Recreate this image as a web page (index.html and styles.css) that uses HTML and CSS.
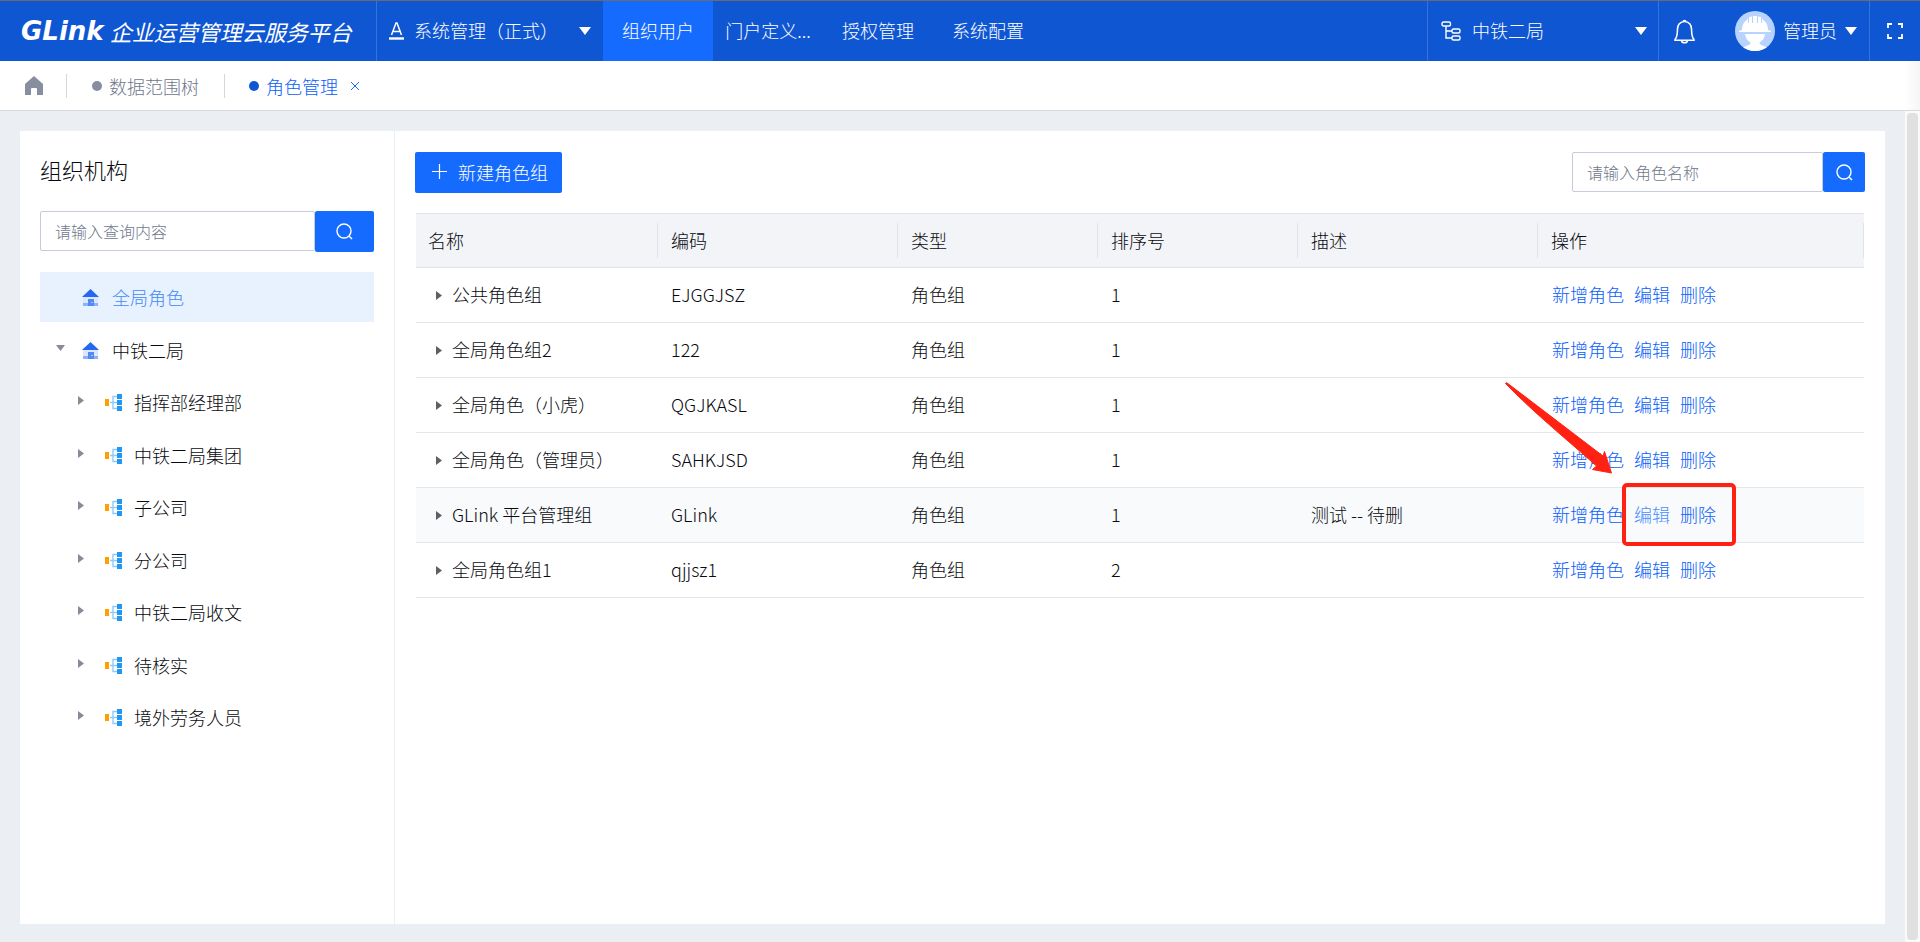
FILE: index.html
```
<!DOCTYPE html>
<html lang="zh-CN">
<head>
<meta charset="utf-8">
<meta name="viewport" content="width=device-width, initial-scale=1">
<title>角色管理</title>
<link rel="stylesheet" href="styles.css">
</head>
<body>
<svg class="symbols" aria-hidden="true">
  <symbol id="i-down" viewBox="0 0 12 8"><path d="M0 0h12L6 8z" fill="currentColor"/></symbol>
  <symbol id="i-right" viewBox="0 0 6 9"><path d="M0 0l6 4.500L0 9z" fill="currentColor"/></symbol>
  <symbol id="i-search" viewBox="0 0 17 17"><circle cx="8" cy="8" r="7" fill="none" stroke="currentColor" stroke-width="1.4"/><path d="M13 13l3 3" stroke="currentColor" stroke-width="1.4"/></symbol>
  <symbol id="i-house" viewBox="0 0 17 17"><path d="M1 7h15v7H1z" fill="#dbe7ff"/><path d="M1 14h15v3H1z" fill="#8db2fa"/><path d="M6 10h6v7H6z" fill="#5389f5"/><path d="M9.500 13h1v1h-1z" fill="#fff"/><path d="M8.500 0L17 8H0z" fill="#2468f2"/></symbol>
  <symbol id="i-org" viewBox="0 0 17 17"><path d="M5 8.500h7M12 2.500H8v12h4" fill="none" stroke="#90caf9" stroke-width="1.400"/><path d="M0 5h4v7H0z" fill="#ff9f00"/><path d="M12 0h5v5h-5zM12 6h5v5h-5zM12 12h5v5h-5z" fill="#2196f3"/></symbol>
</svg>

<header class="topbar">
  <div class="logo"><span class="logo-mark">GLink</span><span class="logo-name">企业运营管理云服务平台</span></div>
  <div class="picker picker-system">
    <svg class="picker-icon" width="15" height="18" viewBox="0 0 15 18" fill="none" stroke="#fff"><path d="M2.500 13L7 1h1l4.500 12M4.500 9.500h6" stroke-width="1.500"/><path d="M0 16.500h15" stroke-width="2.400"/></svg>
    <select aria-label="系统"><option>系统管理（正式）</option></select>
    <svg class="caret" width="12" height="8"><use href="#i-down"/></svg>
  </div>
  <nav class="menu">
    <a class="active" href="#">组织用户</a>
    <a href="#">门户定义...</a>
    <a href="#">授权管理</a>
    <a href="#">系统配置</a>
  </nav>
  <div class="picker picker-org">
    <svg class="picker-icon" width="20" height="20" viewBox="0 0 20 20" fill="none" stroke="#fff" stroke-width="1.400"><rect x="1" y="1" width="8.500" height="4" rx="1.500"/><rect x="11" y="8" width="8" height="4" rx="1.500"/><rect x="11" y="15" width="8" height="4" rx="1.500"/><path d="M5 5v12h6M5 10h6"/></svg>
    <select aria-label="组织"><option>中铁二局</option></select>
    <svg class="caret" width="12" height="8"><use href="#i-down"/></svg>
  </div>
  <button class="bell" type="button" aria-label="通知">
    <svg width="21" height="25" viewBox="0 0 21 25" fill="none" stroke="#fff" stroke-width="1.600"><path d="M9 2.500a1.600 1.600 0 0 1 3 0M10.500 2.500c-4.500 0-7 3.500-7 7.500 0 4-.4 6.500-1.200 8.500-.5 1-1.300 1.300-1.300 2.800h19c0-1.500-.8-1.800-1.300-2.800-.8-2-1.200-4.500-1.200-8.500 0-4-2.500-7.500-7-7.500zM7.500 21.500c.5 3 5.500 3 6 0"/></svg>
  </button>
  <button class="user" type="button">
    <svg width="40" height="40" viewBox="0 0 40 40"><defs><clipPath id="face"><circle cx="20" cy="20" r="20"/></clipPath></defs><g clip-path="url(#face)"><path d="M0 0h40v40H0z" fill="#b9d3ff"/><path d="M7 19c0-6 3-9 5-10l1-2v5h1V6l3-.5V12h1V5h4v7h1V5.500l3 .5v6h1V7l1 2c2 1 5 4 5 10l3 1v1H4v-1z" fill="#fff"/><path d="M10 23h20c-.5 4-2.500 7-5.500 8.500 0 2 1 2.500 8.500 5V40H7v-3.500c7.500-2.500 8.500-3 8.500-5C12.500 30 10.500 27 10 23z" fill="#fff"/></g></svg>
    <span>管理员</span>
    <svg class="caret" width="12" height="8"><use href="#i-down"/></svg>
  </button>
  <button class="fullscreen" type="button" aria-label="全屏">
    <svg width="16" height="16" viewBox="0 0 16 16" fill="none" stroke="#fff" stroke-width="1.800"><path d="M1 5V1h4M11 1h4v4M15 11v4h-4M5 15H1v-4"/></svg>
  </button>
</header>

<nav class="tabs">
  <a class="home" href="#" aria-label="首页"><svg width="18" height="19" viewBox="0 0 18 19"><path d="M9 0l9 8v11h-6v-6a1 1 0 0 0-1-1H7a1 1 0 0 0-1 1v6H0V8z" fill="#868e9f"/></svg></a>
  <a class="tab" href="#"><i class="dot"></i>数据范围树</a>
  <div class="tab current"><i class="dot"></i><a href="#">角色管理</a><button type="button" aria-label="关闭"><svg width="10" height="10" viewBox="0 0 10 10"><path d="M1 1l8 8M9 1L1 9" stroke="#1a6cff"/></svg></button></div>
</nav>

<main class="stage">
  <div class="panel">
    <aside class="side">
      <h1>组织机构</h1>
      <form class="search">
        <input type="text" aria-label="查询内容" placeholder="请输入查询内容">
        <button type="button" aria-label="查询"><svg width="17" height="17"><use href="#i-search"/></svg></button>
      </form>
      <ul class="tree">
        <li class="root selected"><span class="toggle"></span><svg width="17" height="17"><use href="#i-house"/></svg>全局角色</li>
        <li class="root"><span class="toggle"><svg width="9" height="6"><use href="#i-down"/></svg></span><svg width="17" height="17"><use href="#i-house"/></svg>中铁二局</li>
        <li><span class="toggle"><svg width="6" height="9"><use href="#i-right"/></svg></span><svg width="17" height="17"><use href="#i-org"/></svg>指挥部经理部</li>
        <li><span class="toggle"><svg width="6" height="9"><use href="#i-right"/></svg></span><svg width="17" height="17"><use href="#i-org"/></svg>中铁二局集团</li>
        <li><span class="toggle"><svg width="6" height="9"><use href="#i-right"/></svg></span><svg width="17" height="17"><use href="#i-org"/></svg>子公司</li>
        <li><span class="toggle"><svg width="6" height="9"><use href="#i-right"/></svg></span><svg width="17" height="17"><use href="#i-org"/></svg>分公司</li>
        <li><span class="toggle"><svg width="6" height="9"><use href="#i-right"/></svg></span><svg width="17" height="17"><use href="#i-org"/></svg>中铁二局收文</li>
        <li><span class="toggle"><svg width="6" height="9"><use href="#i-right"/></svg></span><svg width="17" height="17"><use href="#i-org"/></svg>待核实</li>
        <li><span class="toggle"><svg width="6" height="9"><use href="#i-right"/></svg></span><svg width="17" height="17"><use href="#i-org"/></svg>境外劳务人员</li>
      </ul>
    </aside>

    <section class="content">
      <div class="toolbar">
        <button class="create" type="button"><svg width="15" height="15" viewBox="0 0 15 15"><path d="M7.500 0v15M0 7.500h15" stroke="#fff" stroke-width="1.200"/></svg>新建角色组</button>
        <form class="search search-role">
          <input type="text" aria-label="角色名称" placeholder="请输入角色名称">
          <button type="button" aria-label="搜索"><svg width="17" height="17"><use href="#i-search"/></svg></button>
        </form>
      </div>
      <div class="table-wrap">
      <table class="roles">
        <colgroup><col class="c-name"><col class="c-code"><col class="c-type"><col class="c-sort"><col class="c-desc"><col></colgroup>
        <thead>
          <tr><th><span>名称</span></th><th><span>编码</span></th><th><span>类型</span></th><th><span>排序号</span></th><th><span>描述</span></th><th><span>操作</span></th></tr>
        </thead>
        <tbody>
          <tr><td class="name"><svg width="6" height="9"><use href="#i-right"/></svg>公共角色组</td><td>EJGGJSZ</td><td>角色组</td><td>1</td><td></td><td class="ops"><a href="#">新增角色</a><a href="#">编辑</a><a href="#">删除</a></td></tr>
          <tr><td class="name"><svg width="6" height="9"><use href="#i-right"/></svg>全局角色组2</td><td>122</td><td>角色组</td><td>1</td><td></td><td class="ops"><a href="#">新增角色</a><a href="#">编辑</a><a href="#">删除</a></td></tr>
          <tr><td class="name"><svg width="6" height="9"><use href="#i-right"/></svg>全局角色（小虎）</td><td>QGJKASL</td><td>角色组</td><td>1</td><td></td><td class="ops"><a href="#">新增角色</a><a href="#">编辑</a><a href="#">删除</a></td></tr>
          <tr><td class="name"><svg width="6" height="9"><use href="#i-right"/></svg>全局角色（管理员）</td><td>SAHKJSD</td><td>角色组</td><td>1</td><td></td><td class="ops"><a href="#">新增角色</a><a href="#">编辑</a><a href="#">删除</a></td></tr>
          <tr class="hover"><td class="name"><svg width="6" height="9"><use href="#i-right"/></svg>GLink 平台管理组</td><td>GLink</td><td>角色组</td><td>1</td><td>测试 -- 待删</td><td class="ops"><a href="#">新增角色</a><a class="lit" href="#">编辑</a><a href="#">删除</a><span class="mark-box"></span><svg class="mark-arrow" width="108" height="93" viewBox="0 0 108 93"><path d="M1.500 .5L98 74l1.500-4.500L106.500 91l-19-3.500 4-3.500C65 60 30 32 .5 1.500z" fill="#ff2213" stroke="#ff2213" stroke-linejoin="round"/></svg></td></tr>
          <tr><td class="name"><svg width="6" height="9"><use href="#i-right"/></svg>全局角色组1</td><td>qjjsz1</td><td>角色组</td><td>2</td><td></td><td class="ops"><a href="#">新增角色</a><a href="#">编辑</a><a href="#">删除</a></td></tr>
        </tbody>
      </table>
      </div>
    </section>
  </div>
  <div class="scrollbar"><div class="thumb"></div></div>
</main>
</body>
</html>
```
FILE: styles.css
```
* { box-sizing: border-box; }
body {
  margin: 0;
  min-height: 100vh;
  display: flex;
  flex-direction: column;
  background: #ebeff3;
  color: #080a0f;
  font: 300 18px/24px "Noto Sans CJK SC", sans-serif;
}
a { color: inherit; text-decoration: none; }
button, input, select { font: inherit; color: inherit; border: 0; padding: 0; margin: 0; background: none; }
button { cursor: pointer; display: flex; align-items: center; justify-content: center; }
svg { flex: none; display: block; }
.symbols { position: absolute; width: 0; height: 0; }

.topbar {
  display: flex;
  height: 61px;
  border-top: 1px solid #6b6b6b;
  background: #0f56d3;
  color: #fff;
}
.logo { display: flex; align-items: center; width: 376px; padding-left: 21px; gap: 6px; font-style: italic; white-space: nowrap; }
.logo-mark { font-family: "DejaVu Sans", sans-serif; font-weight: 700; font-size: 26px; }
.logo-name { font-size: 22px; font-weight: 400; }
.picker { display: grid; grid-template-columns: auto 1fr auto; align-items: center; border-left: 1px solid #3672dc; }
.picker-system { width: 227px; padding: 0 12px; column-gap: 10px; }
.picker-org { width: 231px; margin-left: auto; padding: 0 11px 0 13px; column-gap: 11px; }
.picker select { grid-area: 1 / 2 / 2 / 4; width: 100%; height: 100%; padding-bottom: 2px; appearance: none; cursor: pointer; }
.picker .picker-icon { grid-area: 1 / 1; }
.picker .caret { grid-area: 1 / 3; pointer-events: none; }
.menu { display: flex; }
.menu a { width: 110px; padding-bottom: 2px; display: flex; align-items: center; justify-content: center; white-space: nowrap; }
.menu .active { background: #166bff; }
.bell { width: 51px; border-left: 1px solid #3672dc; }
.user { padding: 0 12px 0 26px; gap: 8px; }
.user span { padding-bottom: 2px; }
.fullscreen { width: 51px; border-left: 1px solid #3672dc; }

.tabs {
  display: flex;
  align-items: center;
  height: 50px;
  border-bottom: 1px solid #d5dade;
  background: linear-gradient(to left, #f6f6f6, #fff 16px);
}
.home { width: 67px; height: 24px; padding-left: 25px; display: flex; align-items: center; border-right: 1px solid #d3d7de; }
.tab { display: flex; align-items: center; height: 24px; padding: 0 25px; gap: 7px; color: #70788a; }
.tab + .tab { border-left: 1px solid #d3d7de; padding-left: 24px; }
.dot { width: 10px; height: 10px; border-radius: 50%; background: #868e9f; }
.current { color: #0a60fa; }
.current .dot { background: #0f56d3; }
.current button { margin-left: 5px; }

.stage { flex: 1; display: flex; padding: 20px 0 0 20px; gap: 20px; }
.panel { flex: 1; display: flex; margin-bottom: 18px; background: #fff; }
.side { width: 375px; padding: 20px; border-right: 1px solid #ebeef2; }
h1 { margin: 0 0 24px; font-size: 22px; line-height: 36px; font-weight: 300; }
.search { display: flex; }
.search input {
  flex: 1;
  min-width: 0;
  height: 40px;
  padding: 0 14px;
  border: 1px solid #c5cbdb;
  border-radius: 2px;
  font-size: 16px;
}
.search input::placeholder { color: #70788a; opacity: 1; }
.search button { width: 59px; height: 41px; border-radius: 2px; background: #166bff; color: #fff; }
.search-role { width: 293px; }
.search-role button { width: 42px; height: 40px; }

.tree { list-style: none; margin: 20px 0 0; padding: 0; }
.tree li { display: flex; align-items: center; height: 50px; margin-top: 2px; padding-left: 36px; gap: 12px; }
.tree li:nth-child(even) { margin-top: 3px; }
.tree .root { padding-left: 14px; gap: 13px; }
.tree .selected { margin-top: 0; background: #e8f2ff; color: #4489f5; }
.toggle { width: 17px; height: 18px; color: #868a99; display: flex; align-items: start; justify-content: start; padding-left: 2px; padding-top: 3px; }
.root .toggle { width: 15px; padding-top: 4px; }

.content { flex: 1; padding: 21px 20px; }
.toolbar { display: flex; justify-content: space-between; align-items: start; margin-bottom: 20px; }
.create { height: 41px; padding: 0 14px 2px 17px; gap: 11px; border-radius: 2px; background: #166bff; color: #fff; }

.table-wrap { padding: 0 1px; }
.roles { width: 100%; border-collapse: separate; border-spacing: 0; table-layout: fixed; }
.c-name { width: 242px; }
.c-code, .c-desc { width: 240px; }
.c-type, .c-sort { width: 200px; }
.roles th { height: 55px; padding: 0; background: #f2f4f8; border-top: 1px solid #dfe3ea; border-bottom: 1px solid #dfe3ea; text-align: left; font-weight: 300; }
.roles th span { display: block; padding-left: 13px; line-height: 35px; border-right: 1px solid #dfe3ea; }
.roles th:first-child span { padding-left: 12px; }
.roles td { height: 55px; padding: 0 12px 2px 13px; border-bottom: 1px solid #e3e6ed; }
.roles .name svg { display: inline-block; margin: 0 10px 0 7px; vertical-align: 2px; color: #5c6066; }
.roles .hover td { background: #f8fafc; }
.ops { position: relative; color: #0a60fa; }
.roles .ops { padding-left: 14px; }
.ops a { margin-right: 10px; }
.ops .lit { color: #4a8dff; }
.mark-box { position: absolute; left: 84px; top: -5px; width: 114px; height: 63px; border: 4px solid #ff2213; border-radius: 5px; }
.mark-arrow { position: absolute; left: -33px; top: -106px; }

.scrollbar { width: 15px; margin-top: -20px; padding: 2px; background: #fafafa; }
.thumb { height: 100%; border-radius: 4px; background: #e0e0e0; }
```
